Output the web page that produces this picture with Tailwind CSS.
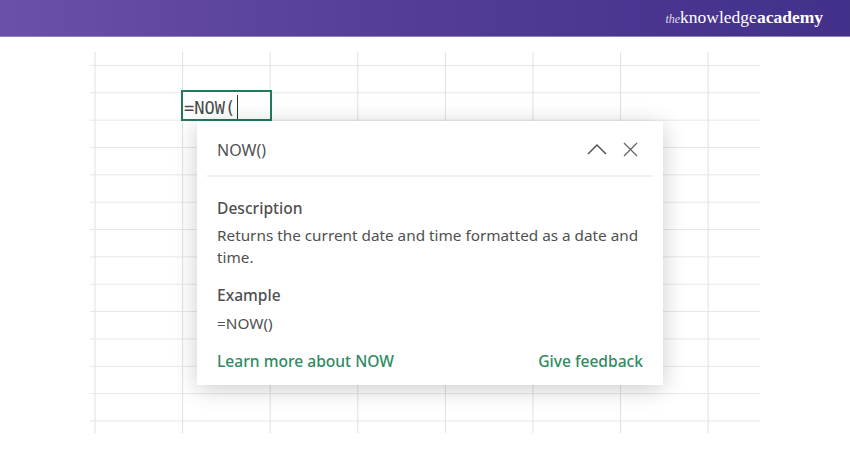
<!DOCTYPE html>
<html lang="en">
<head>
  <meta charset="UTF-8" />
  <title>NOW function</title>
  <script src="https://cdn.jsdelivr.net/npm/@tailwindcss/browser@4"></script>
</head>
<body class="w-[850px] h-[450px] overflow-hidden bg-white font-['Noto_Sans',sans-serif]">
  <!-- header -->
  <header class="h-[37px] flex items-center justify-end pr-[27px] bg-gradient-to-r from-[#6a50a8] via-[#523c96] via-50% to-[#42308a] border-b border-[#8f83b8]">
    <div class="text-white font-['Liberation_Serif',serif] text-[17.5px] leading-none">
      <span class="italic text-[12px] font-normal opacity-80">the</span><span>knowledge</span><span class="font-bold">academy</span>
    </div>
  </header>

  <!-- sheet -->
  <div class="relative ml-[90px] mt-[15px] w-[670px] h-[381px] bg-[linear-gradient(to_right,#e0e0e0_1px,transparent_1px),linear-gradient(to_bottom,#e6e6e6_1px,transparent_1px)] bg-[size:87.6px_100%,100%_27.35px] bg-[position:4.5px_0,0_13px]">
    <!-- active cell -->
    <div class="absolute left-[91px] top-[38px] w-[91px] h-[31px] border-2 border-[#23795a] bg-white flex items-center pl-[1px]">
      <span class="font-['DejaVu_Sans_Mono',monospace] text-[#4a4a4a] text-[17px] leading-none translate-y-[3px]">=NOW(</span><span class="w-px h-[24px] bg-[#1d3b30] ml-[2px] translate-y-[1px]"></span>
    </div>

    <!-- function tooltip -->
    <div class="absolute left-[107px] top-[69px] w-[466px] h-[264px] bg-white shadow-[0_4px_22px_rgba(0,0,0,0.2)] text-[#505050]">
      <div class="mx-[10px] h-[56px] border-b-2 border-[#efefef] flex items-center justify-between pl-[10px] pr-[15px]">
        <span class="text-[16px] translate-y-[2px]">NOW()</span>
        <div class="flex items-center gap-[16px] translate-y-[1px]">
          <svg class="w-[20px] h-[12px]" viewBox="0 0 20 12" fill="none" stroke="#555" stroke-width="1.5"><path d="M1 11 10 2l9 9"/></svg>
          <svg class="w-[15px] h-[15px]" viewBox="0 0 15 15" fill="none" stroke="#666" stroke-width="1.3"><path d="M1 1l13 13M14 1 1 14"/></svg>
        </div>
      </div>
      <div class="px-[20px] pt-[20px] text-[15.3px] leading-[22px]">
        <div class="font-medium text-[15.6px]">Description</div>
        <p class="mt-[5px]">Returns the current date and time formatted as a date and time.</p>
        <div class="mt-[16px] font-medium text-[15.6px]">Example</div>
        <div class="mt-[6px]">=NOW()</div>
        <div class="mt-[16px] flex justify-between font-medium text-[15.6px] text-[#2e8b62]">
          <span>Learn more about NOW</span>
          <span>Give feedback</span>
        </div>
      </div>
    </div>
  </div>
</body>
</html>
